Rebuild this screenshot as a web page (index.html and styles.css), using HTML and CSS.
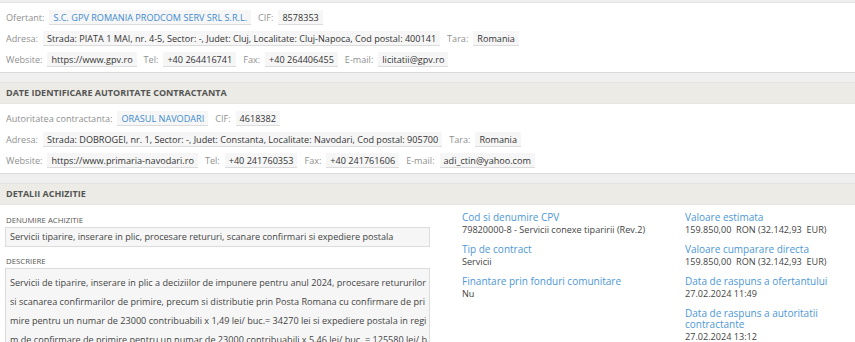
FILE: index.html
```html
<!DOCTYPE html>
<html lang="ro">

<head>
    <meta charset="UTF-8">
    <title>Detalii achizitie</title>

    <link rel="stylesheet" href="styles.css">
</head>

<body>

    <div class="panel">
        <div class="panel-body">
            <div class="row">
                <span class="lbl">Ofertant:</span><span class="val link">S.C. GPV ROMANIA PRODCOM SERV SRL S.R.L.</span>
                <span class="lbl">CIF:</span><span class="val">8578353</span>
            </div>
            <div class="row">
                <span class="lbl">Adresa:</span><span class="val">Strada: PIATA 1 MAI, nr. 4-5, Sector: -, Judet: Cluj, Localitate: Cluj-Napoca, Cod postal: 400141</span>
                <span class="lbl">Tara:</span><span class="val">Romania</span>
            </div>
            <div class="row">
                <span class="lbl">Website:</span><span class="val">https://www.gpv.ro</span>
                <span class="lbl">Tel:</span><span class="val">+40 264416741</span>
                <span class="lbl">Fax:</span><span class="val">+40 264406455</span>
                <span class="lbl">E-mail:</span><span class="val">licitatii@gpv.ro</span>
            </div>
        </div>
    </div>

    <div class="panel">
        <div class="panel-head">DATE IDENTIFICARE AUTORITATE CONTRACTANTA</div>
        <div class="panel-body">
            <div class="row">
                <span class="lbl">Autoritatea contractanta:</span><span class="val link">ORASUL NAVODARI</span>
                <span class="lbl">CIF:</span><span class="val">4618382</span>
            </div>
            <div class="row">
                <span class="lbl">Adresa:</span><span class="val">Strada: DOBROGEI, nr. 1, Sector: -, Judet: Constanta, Localitate: Navodari, Cod postal: 905700</span>
                <span class="lbl">Tara:</span><span class="val">Romania</span>
            </div>
            <div class="row">
                <span class="lbl">Website:</span><span class="val">https://www.primaria-navodari.ro</span>
                <span class="lbl">Tel:</span><span class="val">+40 241760353</span>
                <span class="lbl">Fax:</span><span class="val">+40 241761606</span>
                <span class="lbl">E-mail:</span><span class="val">adi_ctin@yahoo.com</span>
            </div>
        </div>
    </div>

    <div class="panel last">
        <div class="panel-head">DETALII ACHIZITIE</div>
        <div class="details">
            <div class="col-main">
                <div class="field-label">DENUMIRE ACHIZITIE</div>
                <div class="field-box">Servicii tiparire, inserare in plic, procesare retururi, scanare confirmari si expediere postala</div>
                <div class="field-label descr-label">DESCRIERE</div>
                <div class="field-area">Servicii de tiparire, inserare in plic a deciziilor de impunere pentru anul 2024, procesare retururilor si scanarea confirmarilor de primire, precum si distributie prin Posta Romana cu confirmare de primire pentru un numar de 23000 contribuabili x 1,49 lei/ buc.= 34270 lei si expediere postala in regim de confirmare de primire pentru un numar de 23000 contribuabili x 5,46 lei/ buc. = 125580 lei/ bus. <a href="#" class="more">mai putin</a></div>
            </div>
            <div class="col-info">
                <div class="info">
                    <div class="info-title">Cod si denumire CPV</div>
                    <div class="info-value">79820000-8 - Servicii conexe tiparirii (Rev.2)</div>
                </div>
                <div class="info">
                    <div class="info-title">Tip de contract</div>
                    <div class="info-value">Servicii</div>
                </div>
                <div class="info">
                    <div class="info-title">Finantare prin fonduri comunitare</div>
                    <div class="info-value">Nu</div>
                </div>
            </div>
            <div class="col-info">
                <div class="info">
                    <div class="info-title">Valoare estimata</div>
                    <div class="info-value">159.850,00&nbsp; RON (32.142,93&nbsp; EUR)</div>
                </div>
                <div class="info">
                    <div class="info-title">Valoare cumparare directa</div>
                    <div class="info-value">159.850,00&nbsp; RON (32.142,93&nbsp; EUR)</div>
                </div>
                <div class="info">
                    <div class="info-title">Data de raspuns a ofertantului</div>
                    <div class="info-value">27.02.2024 11:49</div>
                </div>
                <div class="info">
                    <div class="info-title">Data de raspuns a autoritatii contractante</div>
                    <div class="info-value">27.02.2024 13:12</div>
                </div>
            </div>
        </div>
    </div>

</body>

</html>
```

FILE: styles.css
```css
body {
    margin: 0;
    padding-top: 2px;
    background-color: #efefef;
    font-family: "Open Sans", "DejaVu Sans", sans-serif;
    color: #333;
}

/* Panels */
.panel {
    background-color: #fff;
    border-top: 1px solid #e3e3e3;
    border-bottom: 1px solid #d9d9d9;
    margin-bottom: 9px;
}

.panel.last {
    margin-bottom: 0;
    border-bottom: none;
    height: 200px;
    overflow: hidden;
}

.panel-head {
    height: 20px;
    line-height: 20px;
    padding: 0 6px;
    background-color: #ecebe5;
    border-bottom: 1px solid #e6e5df;
    font-size: 9px;
    font-weight: 700;
    color: #555;
}

.panel-body {
    padding: 4px 6px 2px;
}

/* Rows of label + value */
.row {
    display: flex;
    align-items: center;
    height: 21px;
    font-size: 9.1px;
    white-space: nowrap;
}

.lbl {
    color: #8f8f8f;
    margin-right: 5px;
}

.val {
    background-color: #f6f6f6;
    border-bottom: 1px solid #dcdcdc;
    padding: 1px 4px 0;
    line-height: 13px;
    margin-right: 7px;
}

.val.link {
    color: #3d8bd0;
}

/* Detalii achizitie */
.details {
    display: grid;
    grid-template-columns: 425px 191px 1fr;
    column-gap: 32px;
    padding-left: 5px;
}

.col-main {
    padding-top: 10px;
}

.field-label {
    height: 10px;
    line-height: 10px;
    padding-left: 1px;
    font-size: 7.8px;
    color: #555;
}

.descr-label {
    margin-top: 9px;
}

.field-box,
.field-area {
    margin-top: 2px;
    background-color: #f6f6f6;
    border: 1px solid #dcdcdc;
    font-size: 9.1px;
    color: #444;
}

.field-box {
    height: 18px;
    line-height: 18px;
    padding: 0 4px;
    white-space: nowrap;
}

.field-area {
    padding: 4px 1px 4px 4px;
    line-height: 19px;
    word-break: break-all;
}

.more {
    color: #3d8bd0;
    text-decoration: none;
}

.col-info {
    padding-top: 7px;
}

.info {
    margin-bottom: 8px;
}

.info-title {
    font-size: 10px;
    line-height: 11px;
    color: #4d97d6;
}

.info-value {
    font-size: 9.1px;
    line-height: 13px;
    color: #444;
}
```
